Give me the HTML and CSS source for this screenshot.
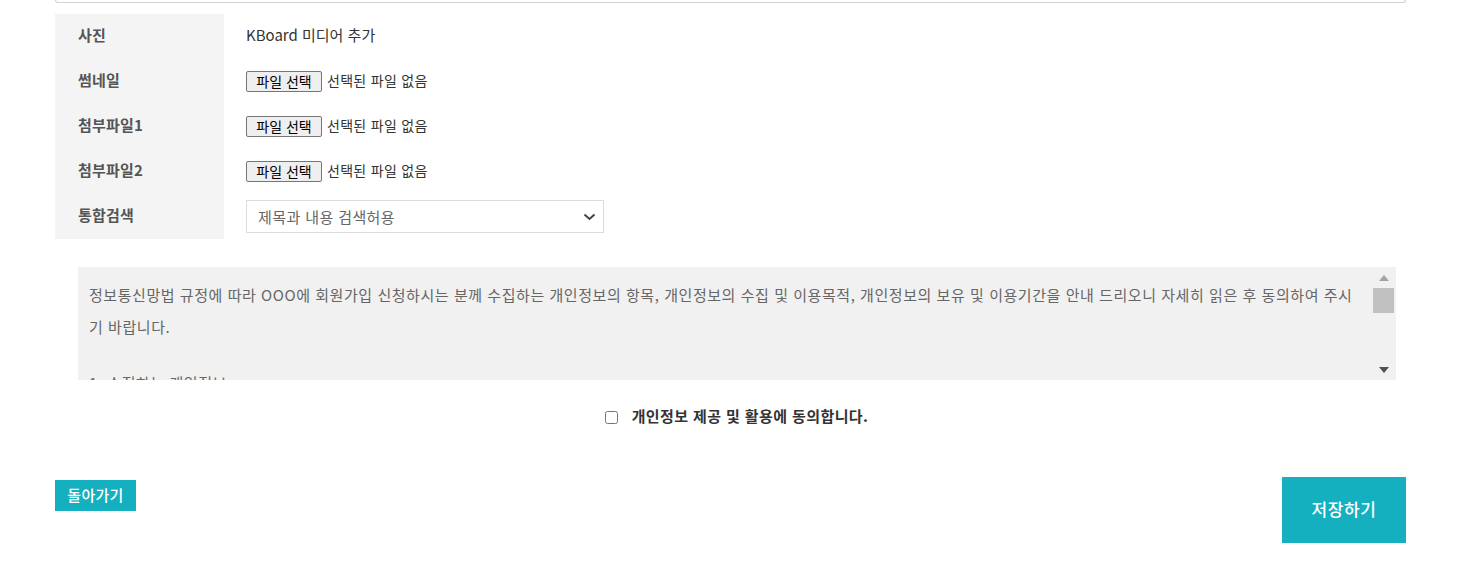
FILE: index.html
```html
<!DOCTYPE html>
<html lang="ko">
<head>
<meta charset="utf-8">
<title>KBoard</title>
<link rel="stylesheet" href="styles.css">
</head>
<body>
<div class="wrap">
  <div class="editor-end"></div>

  <div class="fields">
    <div class="row">
      <div class="label"><span class="label-text">사진</span></div>
      <div class="value"><span class="media-link">KBoard 미디어 추가</span></div>
    </div>
    <div class="row">
      <div class="label"><span class="label-text">썸네일</span></div>
      <div class="value"><span class="file-btn">파일 선택</span><span class="file-name">선택된 파일 없음</span></div>
    </div>
    <div class="row">
      <div class="label"><span class="label-text">첨부파일1</span></div>
      <div class="value"><span class="file-btn">파일 선택</span><span class="file-name">선택된 파일 없음</span></div>
    </div>
    <div class="row">
      <div class="label"><span class="label-text">첨부파일2</span></div>
      <div class="value"><span class="file-btn">파일 선택</span><span class="file-name">선택된 파일 없음</span></div>
    </div>
    <div class="row">
      <div class="label"><span class="label-text">통합검색</span></div>
      <div class="value">
        <div class="select-wrap">
          <select class="select">
            <option>제목과 내용 검색허용</option>
          </select>
          <svg class="chevron" width="13" height="8" viewBox="0 0 13 8"><path d="M1.5 1.5 L6.5 6 L11.5 1.5" fill="none" stroke="#444" stroke-width="2"/></svg>
        </div>
      </div>
    </div>
  </div>

  <div class="agreement">
    <div class="agreement-text">
      <p class="para">정보통신망법 규정에 따라 OOO에 회원가입 신청하시는 분께 수집하는 개인정보의 항목, 개인정보의 수집 및 이용목적, 개인정보의 보유 및 이용기간을 안내 드리오니 자세히 읽은 후 동의하여 주시<br>기 바랍니다.</p>
      <p class="para">1. 수집하는 개인정보</p>
    </div>
    <div class="scrollbar">
      <span class="arrow-up"></span>
      <span class="thumb"></span>
      <span class="spacer"></span>
      <span class="arrow-down"></span>
    </div>
  </div>

  <label class="agree">
    <input type="checkbox" class="agree-check">
    <span class="agree-text">개인정보 제공 및 활용에 동의합니다.</span>
  </label>

  <div class="actions">
    <button class="btn-back">돌아가기</button>
    <button class="btn-save">저장하기</button>
  </div>
</div>
</body>
</html>
```

FILE: styles.css
```css
html, body {
  margin: 0;
  padding: 0;
  background: #fff;
}
body {
  font-family: "Noto Sans CJK KR", "Noto Sans", sans-serif;
  font-size: 14px;
  color: #333;
}
.wrap {
  width: 1351px;
  margin-left: 55px;
}
.editor-end {
  height: 2px;
  border: 1px solid #d2d2d2;
  border-top: none;
  border-radius: 0 0 5px 5px;
}
.fields {
  margin-top: 11px;
}
.row {
  display: flex;
  height: 45px;
}
.label {
  width: 146px;
  padding-left: 23px;
  background: #f4f4f4;
  display: flex;
  align-items: center;
}
.label-text {
  font-weight: 700;
  color: #555;
  font-size: 15px;
  letter-spacing: 0.2px;
  margin-bottom: 5px;
}
.value {
  display: flex;
  align-items: center;
  padding-left: 22px;
}
.media-link {
  color: #333;
  font-size: 15px;
  margin-bottom: 5px;
}
.file-btn {
  box-sizing: border-box;
  height: 21px;
  width: 76px;
  border: 1px solid #767676;
  border-radius: 2px;
  background: #efefef;
  font-size: 14px;
  color: #000;
  display: flex;
  align-items: center;
  justify-content: center;
  line-height: 1;
  padding-bottom: 1px;
}
.file-name {
  margin-left: 5px;
  font-size: 14px;
  letter-spacing: 0.3px;
  color: #333;
  margin-bottom: 3px;
}
.select-wrap {
  position: relative;
  width: 358px;
  height: 33px;
}
.select {
  appearance: none;
  -webkit-appearance: none;
  box-sizing: border-box;
  width: 358px;
  height: 33px;
  border: 1px solid #dcdcdc;
  border-radius: 0;
  background: #fff;
  padding: 0 11px;
  font-family: inherit;
  font-size: 15px;
  letter-spacing: 0.4px;
  color: #666;
  outline: none;
}
.chevron {
  position: absolute;
  right: 8px;
  top: 13px;
  pointer-events: none;
}
.agreement {
  display: flex;
  margin: 28px 10px 0 23px;
  height: 113px;
  background: #f1f1f1;
  overflow: hidden;
}
.agreement-text {
  flex: 1;
  padding: 12px 0 0 11px;
  color: #666;
  font-size: 15px;
  letter-spacing: 0.55px;
  line-height: 32px;
  overflow: hidden;
}
.para {
  margin: 0 0 24px;
  white-space: nowrap;
}
.scrollbar {
  width: 25px;
  display: flex;
  flex-direction: column;
  align-items: center;
  padding: 8px 0 7px;
  box-sizing: border-box;
}
.arrow-up {
  width: 0;
  height: 0;
  border-left: 5px solid transparent;
  border-right: 5px solid transparent;
  border-bottom: 6px solid #a3a3a3;
}
.thumb {
  margin-top: 7px;
  width: 21px;
  height: 25px;
  background: #c1c1c1;
}
.spacer {
  flex: 1;
}
.arrow-down {
  width: 0;
  height: 0;
  border-left: 5px solid transparent;
  border-right: 5px solid transparent;
  border-top: 6px solid #505050;
}
.agree {
  display: flex;
  align-items: center;
  justify-content: center;
  margin-top: 22px;
  height: 30px;
  padding-left: 12px;
}
.agree-check {
  width: 13px;
  height: 13px;
  margin: 0 14px 0 0;
}
.agree-text {
  font-weight: 700;
  font-size: 15px;
  letter-spacing: 0.4px;
  color: #333;
  margin-bottom: 3px;
}
.actions {
  display: flex;
  justify-content: space-between;
  align-items: flex-start;
  margin-top: 45px;
}
.btn-back {
  margin-top: 3px;
  width: 81px;
  height: 31px;
  border: none;
  background: #14b0bf;
  color: #fff;
  font-family: inherit;
  font-size: 15px;
  letter-spacing: 0.3px;
  font-weight: 500;
  padding: 0 0 3px;
}
.btn-save {
  width: 124px;
  height: 66px;
  border: none;
  background: #14b0bf;
  color: #fff;
  font-family: inherit;
  font-size: 17px;
  letter-spacing: 0.6px;
  font-weight: 500;
  padding: 0 0 3px;
}
```
